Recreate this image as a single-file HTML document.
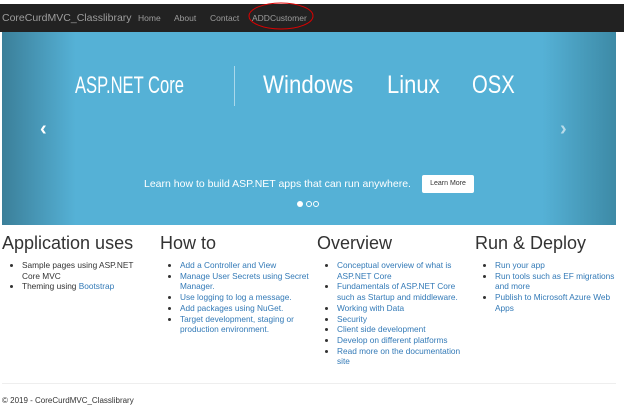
<!DOCTYPE html>
<html><head><style>
body{margin:0;width:624px;height:409px;background:#fff;font-family:"Liberation Sans",sans-serif;position:relative;overflow:hidden}
.nav{position:absolute;top:4px;left:0;width:624px;height:28px;background:#222}
.nav span{position:absolute;top:9px;color:#9d9d9d;font-size:8.5px}
.brand{left:2px!important;top:8px!important;font-size:10.5px!important;color:#9d9d9d}
.car{position:absolute;left:2px;top:32px;width:614px;height:193px;background:linear-gradient(90deg,#3b7f99 0%,#55b1d6 12%,#55b1d6 88%,#3d8aa6 100%)}
.car div{position:absolute;color:#fff}
.big{font-size:25px;top:39px;transform-origin:0 0;white-space:nowrap}
.col{position:absolute;top:233px;width:150px}
h2{font-size:18px;font-weight:normal;margin:0 0 6px;color:#333}
ul{margin:0;padding-left:20px;font-size:8.3px;line-height:10.7px;color:#333}
a{color:#337ab7;text-decoration:none}
</style></head><body>
<div class="nav">
<span class="brand">CoreCurdMVC_Classlibrary</span>
<span style="left:138px">Home</span><span style="left:174px">About</span><span style="left:210px">Contact</span><span style="left:252px">ADDCustomer</span>
<svg style="position:absolute;left:246px;top:-3px" width="70" height="32"><ellipse cx="35" cy="15" rx="32" ry="13" fill="none" stroke="#d00" stroke-width="1"/></svg>
</div>
<div class="car">
<div class="big" style="left:73px;top:40px;font-size:24px;transform:scaleX(.69)">ASP.NET Core</div>
<div style="left:232px;top:34px;width:1px;height:40px;background:rgba(255,255,255,.5)"></div>
<div class="big" style="left:261px;transform:scaleX(.89)">Windows</div>
<div class="big" style="left:385px;transform:scaleX(.88)">Linux</div>
<div class="big" style="left:470px;transform:scaleX(.81)">OSX</div>
<div style="left:38px;top:86px;font-size:20px;font-weight:bold">&#8249;</div>
<div style="left:558px;top:86px;font-size:20px;font-weight:bold;opacity:.6">&#8250;</div>
<div style="left:142px;top:146px;font-size:10.5px">Learn how to build ASP.NET apps that can run anywhere.</div>
<div style="left:420px;top:143px;width:52px;height:18px;background:#fff;border-radius:2px;color:#333;font-size:7px;line-height:18px;text-align:center">Learn More</div>
<div style="left:295px;top:169px;width:6px;height:6px;border-radius:50%;background:#fff"></div>
<div style="left:304px;top:169px;width:4px;height:4px;border-radius:50%;border:1px solid #fff"></div>
<div style="left:311px;top:169px;width:4px;height:4px;border-radius:50%;border:1px solid #fff"></div>
</div>
<div class="col" style="left:2px"><h2>Application uses</h2><ul><li>Sample pages using ASP.NET Core MVC</li><li>Theming using <a>Bootstrap</a></li></ul></div>
<div class="col" style="left:160px"><h2>How to</h2><ul><li><a>Add a Controller and View</a></li><li><a>Manage User Secrets using Secret Manager.</a></li><li><a>Use logging to log a message.</a></li><li><a>Add packages using NuGet.</a></li><li><a>Target development, staging or production environment.</a></li></ul></div>
<div class="col" style="left:317px"><h2>Overview</h2><ul><li><a>Conceptual overview of what is ASP.NET Core</a></li><li><a>Fundamentals of ASP.NET Core such as Startup and middleware.</a></li><li><a>Working with Data</a></li><li><a>Security</a></li><li><a>Client side development</a></li><li><a>Develop on different platforms</a></li><li><a>Read more on the documentation site</a></li></ul></div>
<div class="col" style="left:475px"><h2>Run &amp; Deploy</h2><ul><li><a>Run your app</a></li><li><a>Run tools such as EF migrations and more</a></li><li><a>Publish to Microsoft Azure Web Apps</a></li></ul></div>
<div style="position:absolute;left:2px;top:383px;width:614px;height:1px;background:#eee"></div>
<div style="position:absolute;left:2px;top:396px;font-size:8px;color:#333">© 2019 - CoreCurdMVC_Classlibrary</div>
</body></html>
